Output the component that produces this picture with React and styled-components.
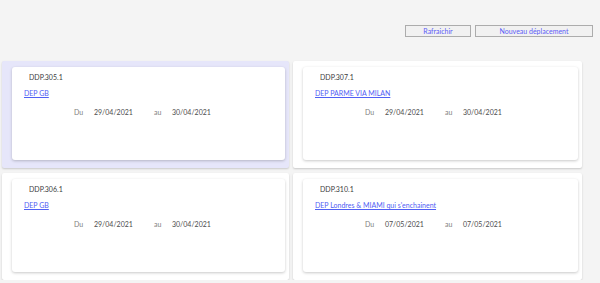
import React from 'react';
import styled, { createGlobalStyle } from 'styled-components';

const GlobalStyle = createGlobalStyle`
    body {
        margin: 0;
        background-color: #f4f4f4;
        font-family: Lato, 'Liberation Sans', sans-serif;
        font-size: 7px;
    }
`;

const StyledPage = styled.div`
    padding-top: 25px;
`;

const Toolbar = styled.div`
    display: flex;
    justify-content: flex-end;
    gap: 4px;
    padding-right: 7px;
`;

const ToolButton = styled.button`
    width: ${props => props.$width}px;
    height: 12px;
    padding: 0;
    background-color: #f1f1f1;
    border: 1px solid #acacac;
    color: #5c5cf7;
    font-family: Lato, 'Liberation Sans', sans-serif;
    font-size: 7px;
    line-height: 10px;
    cursor: pointer;
`;

const TripGrid = styled.div`
    display: grid;
    grid-template-columns: 287px 289px;
    column-gap: 4px;
    row-gap: 5px;
    margin-top: 24px;
    padding-left: 2px;
`;

const Tile = styled.div`
    padding: 6px 4px 8px 10px;
    background-color: ${props => props.$selected ? '#e6e6fa' : '#ffffff'};
    box-shadow: 0 1px 2px rgba(0, 0, 0, 0.18);
    border-radius: 2px;
`;

const Card = styled.div`
    height: 93px;
    box-sizing: border-box;
    padding: 6px 12px;
    background-color: #ffffff;
    border-radius: 3px;
    box-shadow: 0 1px 3px rgba(0, 0, 0, 0.22);
`;

const Code = styled.div`
    margin-left: 5px;
    line-height: 9px;
    color: #3c3c3c;
`;

const TripLink = styled.a`
    display: block;
    margin-top: 7px;
    line-height: 9px;
    color: #5060f4;
    text-decoration: underline;
`;

const DateRow = styled.div`
    display: flex;
    align-items: center;
    margin-top: 10px;
    padding-left: 50px;
    line-height: 9px;
`;

const DateLabel = styled.span`
    width: ${props => props.$width}px;
    color: #808080;
`;

const DateValue = styled.span`
    width: 60px;
    color: #4c4c4c;
`;

const trips = [
    { code: 'DDP.305.1', name: 'DEP GB', from: '29/04/2021', to: '30/04/2021', selected: true },
    { code: 'DDP.307.1', name: 'DEP PARME VIA MILAN', from: '29/04/2021', to: '30/04/2021' },
    { code: 'DDP.306.1', name: 'DEP GB', from: '29/04/2021', to: '30/04/2021' },
    { code: 'DDP.310.1', name: "DEP Londres & MIAMI qui s'enchainent", from: '07/05/2021', to: '07/05/2021' },
];

function App() {
    return (
        <StyledPage>
            <GlobalStyle />
            <Toolbar>
                <ToolButton $width={66}>Rafraichir</ToolButton>
                <ToolButton $width={118}>Nouveau déplacement</ToolButton>
            </Toolbar>
            <TripGrid>
                {
                    trips.map(trip => (
                        <Tile key={trip.code} $selected={trip.selected}>
                            <Card>
                                <Code>{trip.code}</Code>
                                <TripLink href='#'>{trip.name}</TripLink>
                                <DateRow>
                                    <DateLabel $width={20}>Du</DateLabel>
                                    <DateValue>{trip.from}</DateValue>
                                    <DateLabel $width={18}>au</DateLabel>
                                    <DateValue>{trip.to}</DateValue>
                                </DateRow>
                            </Card>
                        </Tile>
                    ))
                }
            </TripGrid>
        </StyledPage>
    )
}

export default App
